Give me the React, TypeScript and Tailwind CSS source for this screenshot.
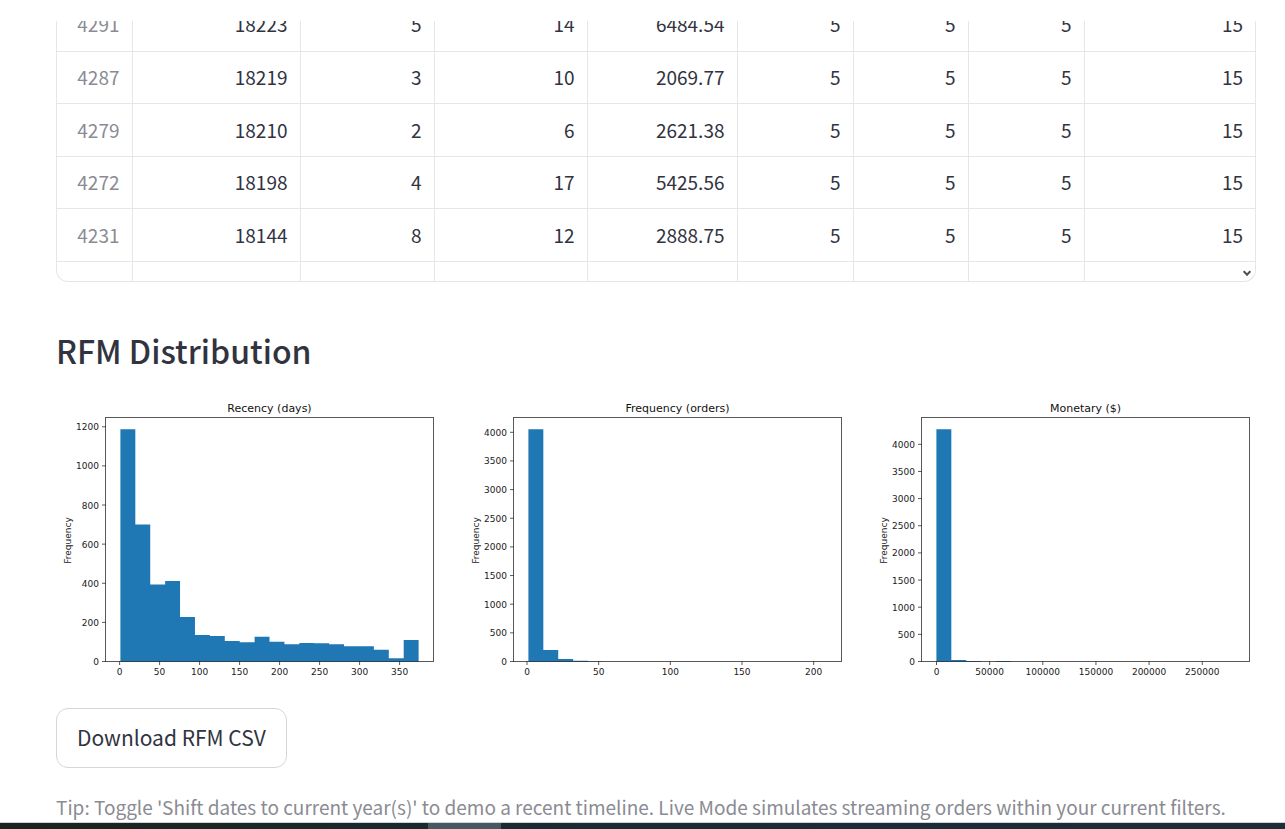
import React from "react";

const rows: string[][] = [
  ["4291", "18223", "5", "14", "6484.54", "5", "5", "5", "15"],
  ["4287", "18219", "3", "10", "2069.77", "5", "5", "5", "15"],
  ["4279", "18210", "2", "6", "2621.38", "5", "5", "5", "15"],
  ["4272", "18198", "4", "17", "5425.56", "5", "5", "5", "15"],
  ["4231", "18144", "8", "12", "2888.75", "5", "5", "5", "15"],
];

function RfmTable() {
  return (
    <div className="relative overflow-hidden rounded-b-xl border border-t-0 border-[#e6e6e8]">
      <table className="-mt-[23px] w-full table-fixed border-collapse text-right text-[19px] leading-6">
        <colgroup>
          <col className="w-[75px]" />
          <col className="w-[168px]" />
          <col className="w-[134px]" />
          <col className="w-[153px]" />
          <col className="w-[150px]" />
          <col className="w-[116px]" />
          <col className="w-[115px]" />
          <col className="w-[116px]" />
          <col />
        </colgroup>
        <tbody>
          {rows.map((row) => (
            <tr key={row[0]} className="odd:h-[53px] even:h-[52px]">
              {row.map((cell, i) =>
                i === 0 ? (
                  <th
                    key={i}
                    scope="row"
                    className="border-r border-b border-[#e6e6e8] py-0 pr-3 font-normal text-[#8a8b93]"
                  >
                    {cell}
                  </th>
                ) : (
                  <td
                    key={i}
                    className="border-r border-b border-[#e6e6e8] py-0 pr-3 last:border-r-0"
                  >
                    {cell}
                  </td>
                ),
              )}
            </tr>
          ))}
          <tr className="h-5">
            {rows[0].map((_, i) => (
              <td key={i} className="border-r border-[#e6e6e8] p-0 last:border-r-0" />
            ))}
          </tr>
        </tbody>
      </table>
      <svg
        viewBox="0 0 8 7"
        className="absolute right-1 bottom-1 h-[7px] w-2"
        fill="none"
        stroke="#505050"
        strokeWidth="2"
        aria-hidden="true"
      >
        <path d="M0.7 1.2 L4 4.8 L7.3 1.2" />
      </svg>
    </div>
  );
}

type HistogramProps = {
  title: string;
  counts: number[];
  xTicks: number[];
  xOrigin: number;
  xScale: number;
  yTicks: number[];
  yScale: number;
};

const LEFT = 49.5;
const RIGHT = 377.5;
const TOP = 17.5;
const BASE = 261.5;
const BIN = 14.91;

function Histogram({ title, counts, xTicks, xOrigin, xScale, yTicks, yScale }: HistogramProps) {
  const first = LEFT + BIN;
  const outline = counts
    .map((c, i) => `V${BASE - c * yScale} H${first + (i + 1) * BIN}`)
    .join(" ");
  return (
    <svg
      viewBox="0 0 384 280"
      role="img"
      aria-label={title}
      className="block w-full font-['DejaVu_Sans',sans-serif]"
    >
      <path d={`M${first} ${BASE} ${outline} V${BASE} Z`} fill="#1f77b4" />
      <rect
        x={LEFT}
        y={TOP}
        width={RIGHT - LEFT}
        height={BASE - TOP}
        fill="none"
        stroke="#000"
        strokeOpacity="0.65"
      />
      <g stroke="#000" strokeOpacity="0.65">
        {xTicks.map((t) => (
          <path key={t} d={`M${xOrigin + t * xScale} ${BASE} v3.5`} />
        ))}
        {yTicks.map((t) => (
          <path key={t} d={`M${LEFT} ${BASE - t * yScale} h-3.5`} />
        ))}
      </g>
      <g fontSize="9" fill="#1a1a1a">
        {xTicks.map((t) => (
          <text key={t} x={xOrigin + t * xScale} y="275" textAnchor="middle">
            {t}
          </text>
        ))}
        {yTicks.map((t) => (
          <text key={t} x="43" y={BASE - t * yScale + 3.5} textAnchor="end">
            {t}
          </text>
        ))}
        <text transform="translate(15 140.5) rotate(-90)" textAnchor="middle">
          Frequency
        </text>
      </g>
      <text x="213.5" y="12" fontSize="11" fill="#111" textAnchor="middle">
        {title}
      </text>
    </svg>
  );
}

const charts: HistogramProps[] = [
  {
    title: "Recency (days)",
    counts: [
      1187, 701, 394, 411, 228, 135, 130, 105, 98, 127, 101, 88, 95, 93, 88, 78, 78, 60, 16, 110,
    ],
    xTicks: [0, 50, 100, 150, 200, 250, 300, 350],
    xOrigin: 63.6,
    xScale: 0.8,
    yTicks: [0, 200, 400, 600, 800, 1000, 1200],
    yScale: 0.1956,
  },
  {
    title: "Frequency (orders)",
    counts: [4052, 200, 45, 14, 6, 2, 0, 0, 0, 0, 0, 0, 0, 0, 0, 0, 0, 0, 0, 1],
    xTicks: [0, 50, 100, 150, 200],
    xOrigin: 63,
    xScale: 1.4333,
    yTicks: [0, 500, 1000, 1500, 2000, 2500, 3000, 3500, 4000],
    yScale: 0.0573,
  },
  {
    title: "Monetary ($)",
    counts: [4275, 27, 10, 2, 8, 1, 0, 0, 0, 1, 0, 0, 0, 1, 0, 0, 0, 0, 1, 1],
    xTicks: [0, 50000, 100000, 150000, 200000, 250000],
    xOrigin: 64.5,
    xScale: 0.001063,
    yTicks: [0, 500, 1000, 1500, 2000, 2500, 3000, 3500, 4000],
    yScale: 0.0543,
  },
];

export default function App() {
  return (
    <div className="flex min-h-screen flex-col bg-white font-['Noto_Sans_CJK_SC','Noto_Sans',sans-serif] text-[#31333f]">
      <main className="pt-[21px] pr-[29px] pl-14">
        <RfmTable />
        <h2 className="mt-[43px] text-[32px] leading-[50px] font-medium">RFM Distribution</h2>
        <div className="mt-[25px] grid grid-cols-3 gap-6">
          {charts.map((c) => (
            <Histogram key={c.title} {...c} />
          ))}
        </div>
        <button
          type="button"
          className="mt-7 flex h-[60px] items-center rounded-xl border border-[#d6d6d8] px-5 pb-0.5 text-[21px] leading-8"
        >
          Download RFM CSV
        </button>
        <p className="mt-6 text-[19px] leading-[30px] text-[#8a8b93]">
          Tip: Toggle 'Shift dates to current year(s)' to demo a recent timeline. Live Mode simulates
          streaming orders within your current filters.
        </p>
      </main>
      <footer
        aria-hidden="true"
        className="mt-auto flex h-[7px] border-t border-[#c5d3da] bg-linear-to-r from-[#1c231d] via-[#1c2b33] to-[#1f2d36]"
      >
        <div className="w-1/3" />
        <div className="w-[73px] bg-[#4b575f]" />
      </footer>
    </div>
  );
}
